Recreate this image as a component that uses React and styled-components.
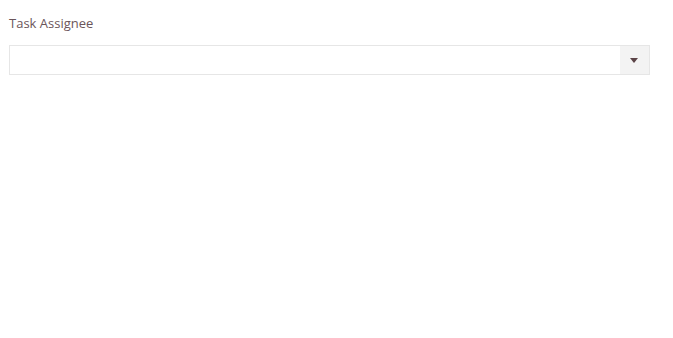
import React from 'react'
import styled, { createGlobalStyle } from 'styled-components'

const GlobalStyle = createGlobalStyle`
  body {
    margin: 0;
    background: #fff;
    font-family: "Segoe UI", "Open Sans", "Noto Sans", sans-serif;
  }
`;

const Page = styled.div`
  padding: 13px 23px 0 9px;
  width: 641px;
`;

const Label = styled.label`
  display: block;
  font-size: 13px;
  color: #6b555a;
  line-height: 20px;
  margin-bottom: 12px;
`;

const Select = styled.div`
  display: flex;
  height: 28px;
  border: 1px solid #e6e6e6;
  box-sizing: content-box;
`;

const Value = styled.div`
  flex: 1;
`;

const Toggle = styled.div`
  width: 29px;
  background: #f3f3f3;
  display: flex;
  align-items: center;
  justify-content: center;
`;

const Arrow = styled.span`
  width: 0;
  height: 0;
  border-left: 4px solid transparent;
  border-right: 4px solid transparent;
  border-top: 5px solid #5b4347;
  margin-left: -2px;
`;

const App = () => {
  return (
    <Page>
      <GlobalStyle />
      <Label>Task Assignee</Label>
      <Select>
        <Value />
        <Toggle>
          <Arrow />
        </Toggle>
      </Select>
    </Page>
  )
}

export default App
